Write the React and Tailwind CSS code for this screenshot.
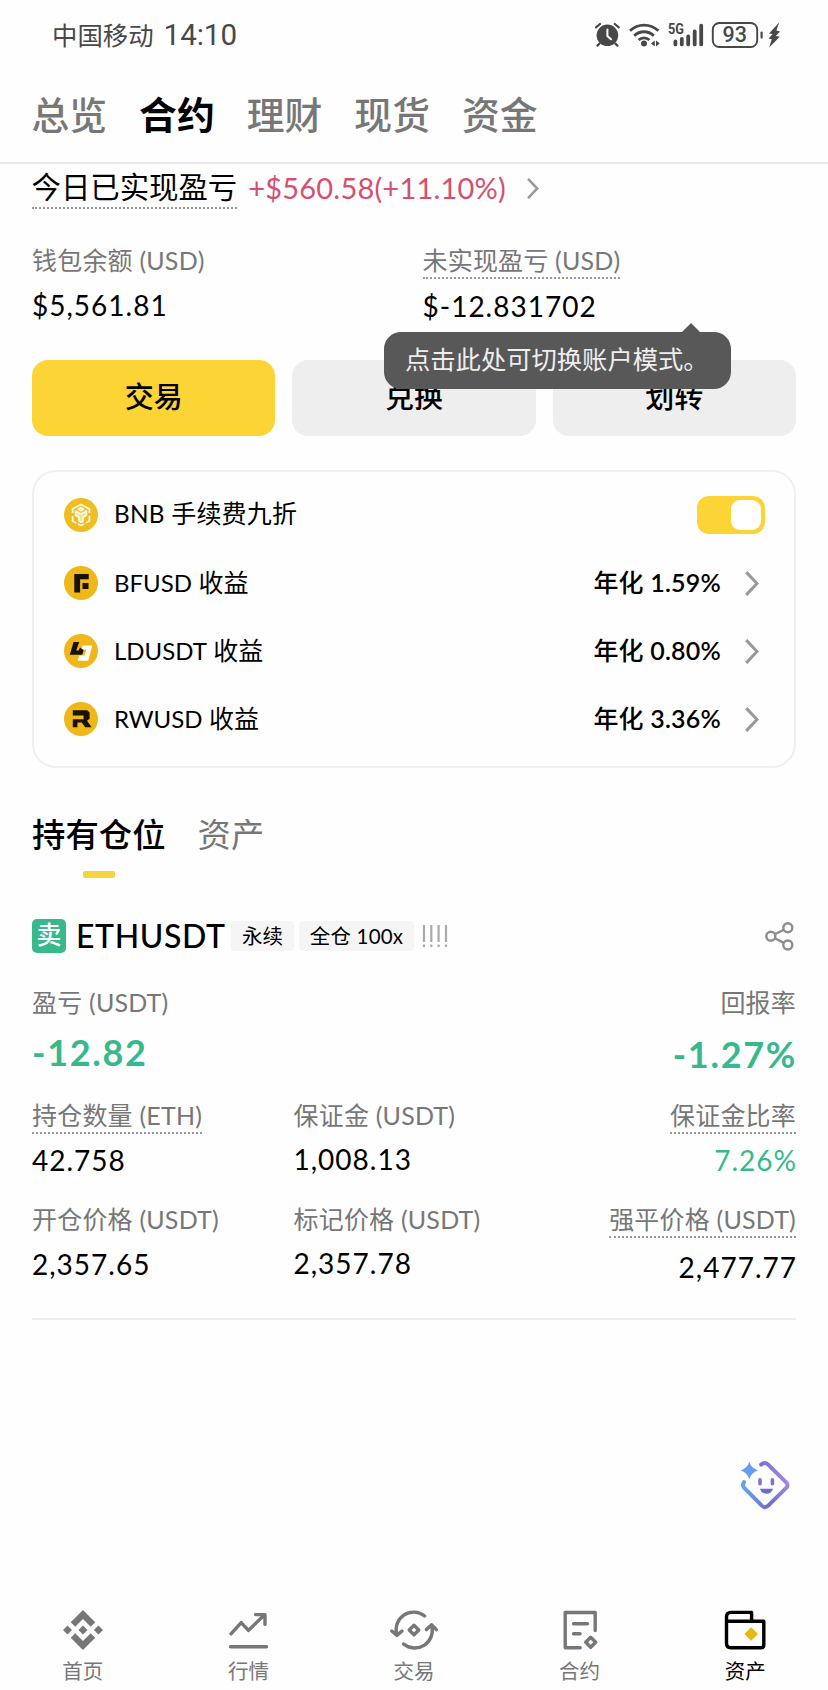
import { useState } from "react";
import { SiBinance } from "react-icons/si";

const TOP_TABS = ["总览", "合约", "理财", "现货", "资金"];

// ---------- status bar ----------

function StatusIcons() {
  return (
    <svg className="w-[190px] h-[30px]" viewBox="0 0 190 30" fill="none" stroke="#484848" strokeLinecap="round">
      {/* alarm */}
      <circle cx="13.4" cy="15.3" r="10.8" fill="#484848" stroke="none" />
      <path d="M13.4 9.5v6.5l3.6 3.3" stroke="#fff" strokeWidth="2" />
      <path d="M2 7.4 6 4M20.8 4l4 3.4M5.4 23.6l-2 2M21.4 23.6l2 2" strokeWidth="2.2" />
      {/* wifi */}
      <circle cx="50" cy="23.5" r="3" fill="#484848" stroke="none" />
      <path d="M36 10.8c8-7.6 20-7.6 28.4 0M40.2 15.8c5.6-5.4 14-5.4 19.6 0M44.6 20c3-2.9 7.8-2.9 10.8 0" strokeWidth="2.8" strokeLinecap="butt" />
      <path d="M60.8 20.5v6L57 23.5zM62 20.5v6l3.8-3z" fill="#484848" stroke="none" />
      {/* signal */}
      <text x="74" y="14.2" fontSize="15" fontWeight="700" fill="#484848" stroke="none" textLength="16" lengthAdjust="spacingAndGlyphs" className="font-['Roboto']">5G</text>
      <path d="M81.4 21.5V24.4M87.8 19V24.4M94.2 16.3V24.4M100.7 11.4V24.4M107.2 5.6V24.4" strokeWidth="3.8" />
      {/* battery */}
      <rect x="118.8" y="3" width="44.4" height="24" rx="6.5" strokeWidth="1.9" />
      <text x="140.8" y="22.4" fontSize="21.5" fontWeight="500" fill="#484848" stroke="none" textAnchor="middle" className="font-['Roboto']">93</text>
      <path d="M167.6 12.6v5" strokeWidth="2.2" />
      <path d="M185.2 2.6 175 13.4l3.6.6-4 4.6 3.2.6-2.6 8.2 10.6-10.6-4-.8 4.2-4.6-3.6-.8z" fill="#484848" stroke="none" />
    </svg>
  );
}

function StatusBar() {
  return (
    <div className="h-[70px] flex items-center justify-between pl-[52px] pr-[44px] text-[#484848]">
      <div className="flex items-baseline gap-[10px] leading-[40px] font-['Roboto','Noto_Sans_CJK_SC',sans-serif]">
        <span className="text-[25.4px]">中国移动</span>
        <span className="text-[29.5px]">14:10</span>
      </div>
      <StatusIcons />
    </div>
  );
}

// ---------- shared bits ----------

function Chevron({ className }) {
  return (
    <svg className={className} viewBox="0 0 14 24" fill="none" stroke="#999" strokeWidth="3" preserveAspectRatio="none">
      <path d="M1.2 1 12 12 1.2 23" />
    </svg>
  );
}

function Stat({ label, value, dotted, right, valueClass }) {
  return (
    <div className={`flex flex-col ${right ? "items-end" : "items-start"}`}>
      <span
        className={`text-[25px] leading-8 tracking-[0.2px] text-[#777] whitespace-nowrap ${
          dotted ? "pb-[1px] border-b-2 border-dotted border-[#999]" : ""
        }`}
      >
        {label}
      </span>
      <span className={`whitespace-nowrap ${right ? "-mr-[1px]" : ""} ${valueClass}`}>{value}</span>
    </div>
  );
}

// ---------- coins ----------

function Coin({ type }) {
  return (
    <svg className="w-[34px] h-[34px]" viewBox="0 0 34 34">
      <circle cx="17" cy="17" r="17" fill={type === "BNB" ? "#efbd1f" : "#efb717"} />
      {type === "BNB" && (
        <g fill="none" stroke="#fffbe8" strokeWidth="1.7" strokeLinejoin="round">
          <path d="M12.2 9 17 6.4 21.8 9M8.6 15v-4l3.6-2M25.4 15v-4l-3.6-2M8.6 18v5l3.6 2.1M25.4 18v5l-3.6 2.1M14 26l3 1.6 3-1.6" />
          <path d="m11.600 13 5.400 3 5.400-3v4.200l-3.400 2v3.800L17 24.200 15 23v-3.800l-3.400-2z" fill="#fffbe8" fillOpacity="0.6" />
          <path d="m14.400 11.200 2.600-1.500 2.600 1.500-2.600 1.500z" />
        </g>
      )}
      {type === "BFUSD" && <path d="M10.3 8h14.4v5.2h-8.6v13.2h-5.8zM18.5 17h6v6h-6z" fill="#18120c" />}
      {type === "LDUSDT" && (
        <>
          <path d="M18.6 11.5h9.8L24.2 26.8H13.6l1.6-5.2h5.2l2-6h-4.8z" fill="#fffef5" />
          <path d="M9.6 8h5.6l-3 8.6h2.4l1.4-3.2 3.6 2.8-1.4 4.600H5.800z" fill="#18120c" />
        </>
      )}
      {type === "RWUSD" && (
        <path d="M8.8 8.2h14.400l2.400 2.400v6.200l-2.600 2 4.600 6.400h-6.400l-3.400-4.800h-4.400v4.800H8.800v-8h10.800v-3.600H8.800z" fill="#18120c" />
      )}
    </svg>
  );
}

const EARN_ROWS = [
  { coin: "BFUSD", apr: "1.59%" },
  { coin: "LDUSDT", apr: "0.80%" },
  { coin: "RWUSD", apr: "3.36%" },
];

function EarnCard() {
  const [feeOff, setFeeOff] = useState(true);

  return (
    <div className="mx-8 mt-[34px] h-[298px] rounded-[24px] border-2 border-[#efefef] pt-[9px] pl-[29.5px] pr-[29px] text-[25px] leading-8">
      <div className="h-[68px] flex items-center">
        <Coin type="BNB" />
        <span className="ml-[16.500px] pb-[3px] tracking-[0.2px]">
          <span className="text-[24.300px]">BNB</span> 手续费九折
        </span>
        <button
          onClick={() => setFeeOff(!feeOff)}
          className={`ml-auto w-[68px] h-[38px] rounded-[12px] p-1 flex items-center ${
            feeOff ? "bg-[#fcd435] justify-end" : "bg-gray-300 justify-start"
          }`}
          aria-label="BNB 手续费九折"
        >
          <span className="w-[30px] h-[30px] rounded-[9px] bg-white" />
        </button>
      </div>
      {EARN_ROWS.map((row) => (
        <div key={row.coin} className="h-[68px] flex items-center">
          <Coin type={row.coin} />
          <span className="ml-[16.500px] pb-[2px]">
            <span className="text-[24px]">{row.coin}</span> 收益
          </span>
          <span className="ml-auto mr-[24px] pb-[2px] font-medium tracking-[0.2px]">
            年化 <span className="font-semibold">{row.apr}</span>
          </span>
          <Chevron className="w-[14px] h-[25px] mr-[6px]" />
        </div>
      ))}
    </div>
  );
}

// ---------- position ----------

const NUM = "text-[28px] leading-9 tracking-[1px]";
const PNL = "text-[36px] leading-[44px] font-bold tracking-[1.700px] text-[#37b98b]";

function Position() {
  return (
    <div className="mx-8 mt-[41px]">
      <div className="h-[34px] flex items-center">
        <span className="w-[34px] h-[34px] rounded-[5px] bg-[#37b98b] text-white text-[25px] leading-[31px] font-medium text-center">卖</span>
        <span className="ml-[10px] text-[32px] leading-[34px] font-medium tracking-[0.600px] w-[151px] whitespace-nowrap">ETHUSDT</span>
        <span className="ml-[4px] h-[30px] w-[63px] rounded-[4px] bg-[#f5f5f5] text-[20.5px] leading-[30px] text-center">永续</span>
        <span className="ml-[5px] h-[30px] w-[115px] rounded-[4px] bg-[#f5f5f5] text-[20.5px] leading-[30px] tracking-[0.200px] text-center whitespace-nowrap">全仓 100x</span>
        <svg className="ml-[8px] w-[26px] h-[24px]" viewBox="0 0 26 24" stroke="#aaa" strokeWidth="2.200">
          <path d="M2 1v17M9.3 1v17M16.6 1v17M24 1v17M2 20.5v2.500M9.3 20.5v2.500M16.6 20.5v2.500M24 20.5v2.500" />
        </svg>
        <svg className="ml-auto mr-[2px] w-[29px] h-[29px]" viewBox="0 0 29 29" fill="none" stroke="#8c8c8c" strokeWidth="2.400">
          <circle cx="5.8" cy="14.3" r="4.5" />
          <circle cx="22.8" cy="5.8" r="4.5" />
          <circle cx="22.8" cy="23" r="4.5" />
          <path d="m9.8 12.3 9-4.5M9.8 16.3l9 4.6" />
        </svg>
      </div>

      <div className="mt-[33px] flex justify-between">
        <Stat label="盈亏 (USDT)" value="-12.82" valueClass={`mt-[12px] ${PNL}`} />
        <Stat right label="回报率" value="-1.27%" valueClass={`mt-[14px] ${PNL}`} />
      </div>

      <div className="mt-[23px] grid grid-cols-[261.500px_1fr_auto]">
        <Stat dotted label="持仓数量 (ETH)" value="42.758" valueClass={`mt-[8px] ${NUM}`} />
        <Stat label="保证金 (USDT)" value="1,008.13" valueClass={`mt-[10px] ${NUM}`} />
        <Stat dotted right label="保证金比率" value="7.26%" valueClass={`mt-[8px] text-[#37b98b] ${NUM}`} />
      </div>

      <div className="mt-[25px] grid grid-cols-[261.500px_1fr_auto]">
        <Stat label="开仓价格 (USDT)" value="2,357.65" valueClass={`mt-[11px] ${NUM}`} />
        <Stat label="标记价格 (USDT)" value="2,357.78" valueClass={`mt-[10px] ${NUM}`} />
        <Stat dotted right label="强平价格 (USDT)" value="2,477.77" valueClass={`mt-[11px] ${NUM}`} />
      </div>

      <div className="mt-[33px] h-[2px] bg-[#eee]" />
    </div>
  );
}

// ---------- assistant ----------

function Assistant() {
  return (
    <button className="w-[60px] h-[60px]" aria-label="AI">
      <svg viewBox="0 0 60 60" fill="none">
        <defs>
          <linearGradient id="ai" x1="8" y1="40" x2="54" y2="26" gradientUnits="userSpaceOnUse">
            <stop offset="0" stopColor="#62aee8" />
            <stop offset="0.45" stopColor="#7169d6" />
            <stop offset="1" stopColor="#a48ade" />
          </linearGradient>
        </defs>
        <path d="M26.2 9.6q3.6-3.2 7 0L51 27.2q3 3 0 6L33.2 50.6q-3.2 3-6.4 0L9.4 33.2q-2.6-3-.4-6" stroke="url(#ai)" strokeWidth="4" strokeLinecap="round" />
        <path d="M14.3 6.8q2 6.6 8.6 8.6-6.6 2-8.6 8.6-2-6.6-8.6-8.6 6.6-2 8.6-8.6z" fill="#669df2" />
        <path d="M25 24.8v4M37.4 24.8v4" stroke="#7a74d6" strokeWidth="3.6" strokeLinecap="round" />
        <path d="M24.8 33.8h13.2q-1.6 5-6.6 5t-6.6-5z" fill="#7169d6" />
      </svg>
    </button>
  );
}

// ---------- bottom nav ----------

function NavIcon({ name }) {
  if (name === "home") return <SiBinance className="w-10 h-10 text-[#777]" />;

  return (
    <svg className="w-12 h-10" viewBox="0 0 48 40" fill="none" stroke="currentColor" strokeWidth="3.4" strokeLinecap="round" strokeLinejoin="round">
      {name === "market" && <path d="M7 23.8 17.2 12.6l7.2 7.8L40.6 4.8M31.5 4.6H41v9.8M6.5 36.7h36" />}
      {name === "trade" && (
        <>
          <path d="M34.6 6A17.5 17.5 0 0 0 6.9 24.8M1.8 21l5.1 4.4L12 21" />
          <path d="M13.6 34a17.5 17.5 0 0 0 27.900-18.6M36.4 19.6l5.2-4.8 4.8 4.8" />
          <path d="m24 15.2 4.8 4.8-4.8 4.8-4.8-4.800z" />
        </>
      )}
      {name === "futures" && <path d="M39.2 20.5V2.5H9.2V37.800h15M17.5 13.7h14M17.5 23.700h6.500M34.7 27.300l5 5-5 5-5-5z" />}
      {name === "wallet" && (
        <>
          <path d="M5.5 11.3V7q0-4.6 4.6-4.6h20.5v8.900M5.5 11.3H42.8V35q0 2.800-2.800 2.800H10q-4.500 0-4.500-4.500z" />
          <path d="m30.2 17.2 6.800 6.800-6.800 6.800-6.800-6.800z" fill="#e9b80f" stroke="none" />
        </>
      )}
    </svg>
  );
}

const NAV = [
  { icon: "home", label: "首页" },
  { icon: "market", label: "行情" },
  { icon: "trade", label: "交易" },
  { icon: "futures", label: "合约" },
  { icon: "wallet", label: "资产", active: true },
];

export default function App() {
  const [tab, setTab] = useState("合约");

  return (
    <div className="w-[828px] h-[1690px] flex flex-col overflow-hidden bg-[#fefefe] text-black font-['Lato','Noto_Sans_CJK_SC',sans-serif]">
      <StatusBar />

      {/* TOP TABS */}
      <div className="h-[94px] shrink-0 flex items-center gap-[32px] pl-[31.500px] pb-[2px] border-b-2 border-[#e8e8e8]">
        {TOP_TABS.map((t) => (
          <button
            key={t}
            onClick={() => setTab(t)}
            className={`text-[37.800px] leading-[48px] ${t === tab ? "font-bold text-black" : "font-medium text-[#777]"}`}
          >
            {t}
          </button>
        ))}
      </div>

      {/* TODAY PNL */}
      <div className="h-12 shrink-0 flex items-start pl-[31.500px] text-[29.400px] leading-[46px]">
        <span className="h-[45px] border-b-2 border-dotted border-[#999]">今日已实现盈亏</span>
        <span className="ml-[11px] text-[29px] leading-[48px] tracking-[0.200px] text-[#d4506f]">+$560.58(+11.10%)</span>
        <Chevron className="ml-[21px] mt-[14px] w-[12px] h-[21px]" />
      </div>

      {/* BALANCES */}
      <div className="mt-8 h-[80px] shrink-0 pl-8 grid grid-cols-[390.500px_1fr]">
        <Stat label="钱包余额 (USD)" value="$5,561.81" valueClass={`mt-[11px] ${NUM}`} />
        <Stat dotted label="未实现盈亏 (USD)" value="$-12.831702" valueClass={`mt-[9px] ${NUM}`} />
      </div>

      {/* ACTIONS */}
      <div className="relative mt-9 mx-8 h-[76px] shrink-0 grid grid-cols-3 gap-[17px] text-[29px] font-medium">
        <button className="rounded-[16px] bg-[#fcd435] pb-[3px]">交易</button>
        <button className="rounded-[16px] bg-[#eee] pb-[3px]">兑换</button>
        <button className="rounded-[16px] bg-[#eee] pb-[3px]">划转</button>

        {/* account mode hint */}
        <div className="absolute left-[352px] top-[-28px] w-[347px] h-[57px] rounded-[17px] bg-[#585858] pl-[21px] text-[25.300px] leading-[55px] font-normal text-[#eee] whitespace-nowrap">
          点击此处可切换账户模式。
          <span className="absolute left-[298px] top-[-9px] border-x-[9px] border-x-transparent border-b-[9px] border-b-[#585858]" />
        </div>
      </div>

      <EarnCard />

      {/* POSITION TABS */}
      <div className="mt-[42px] mx-8 h-[68px] shrink-0 flex gap-8 text-[33.400px] leading-[48px]">
        <div className="flex flex-col items-center font-medium">
          持有仓位
          <span className="mt-[13px] w-[32px] h-[7px] rounded-[2px] bg-[#f7d33e]" />
        </div>
        <span className="text-[#777]">资产</span>
      </div>

      <Position />

      <div className="mt-[135px] mr-[33px] flex justify-end">
        <Assistant />
      </div>

      {/* BOTTOM NAV */}
      <div className="mt-auto h-[80px] shrink-0 grid grid-cols-5">
        {NAV.map((n) => (
          <button key={n.icon} className={`flex flex-col items-center ${n.active ? "text-black" : "text-[#777]"}`}>
            <NavIcon name={n.icon} />
            <span className="mt-[7px] text-[20.500px] leading-[28px]">{n.label}</span>
          </button>
        ))}
      </div>
    </div>
  );
}
